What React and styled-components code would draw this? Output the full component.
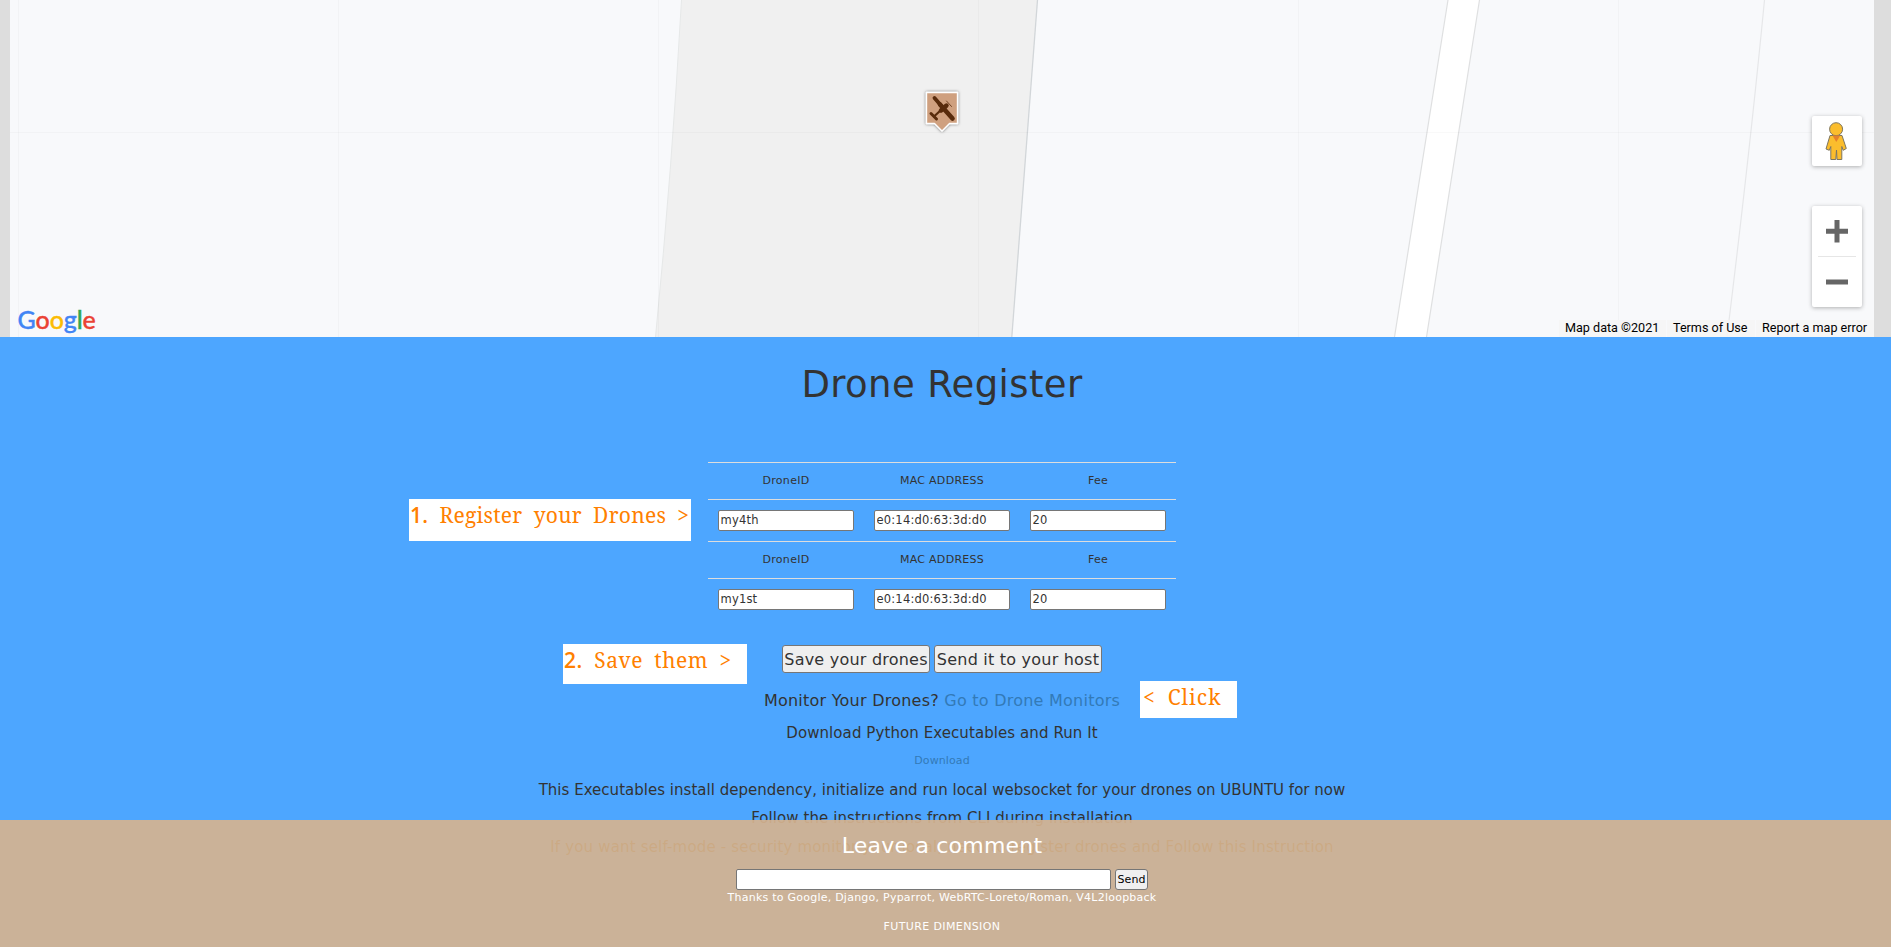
import React from "react";
import styled, { createGlobalStyle } from "styled-components";

const GlobalStyle = createGlobalStyle`
  * { box-sizing: border-box; }
  html, body { margin: 0; height: 100%; overflow: hidden; }
  body {
    background: #4da6ff;
    color: #333;
    font: 11px/20px Verdana, "DejaVu Sans", sans-serif;
  }
`;

const Page = styled.div`
  position: relative;
  height: 947px;
  overflow: hidden;
  background: #4da6ff;
`;

const MapFrame = styled.section`
  height: 337px;
  padding: 0 17px 0 10px;
  background: #ddd;
`;

const MapView = styled.div`
  position: relative;
  height: 100%;
  overflow: hidden;
  background: #f8f9fb;
`;

const MapDrawing = styled.svg`
  display: block;
  width: 1864px;
  height: 337px;
`;

const MapLogo = styled.div`
  position: absolute;
  left: 7.5px;
  bottom: 3px;
  font: 500 25px/30px Lato, sans-serif;
  letter-spacing: -0.1px;
  text-shadow: 0 0 2px #fff, 0 0 2px #fff;
`;

const LogoLetter = styled.span`
  color: ${(p) => p.$color};
  -webkit-text-stroke: 0.4px ${(p) => p.$color};
`;

const MapControls = styled.div`
  position: absolute;
  right: 12px;
  bottom: 30px;
  display: flex;
  flex-direction: column;
  gap: 40px;
`;

const Control = styled.div`
  display: flex;
  flex-direction: column;
  align-items: center;
  width: 50px;
  background: #fff;
  border-radius: 2px;
  box-shadow: 0 1px 4px rgba(0, 0, 0, 0.3);
  svg { display: block; }
`;

const ControlDivider = styled.div`
  width: 38px;
  height: 1px;
  background: #e6e6e6;
`;

const Attribution = styled.div`
  position: absolute;
  right: 0;
  bottom: 0;
  display: flex;
  gap: 1px;
  font: 12.6px/15.5px Roboto, sans-serif;
  color: #000;
`;

const Credit = styled.span`
  width: ${(p) => p.$width}px;
  height: 17px;
  padding-left: 6px;
  background: rgba(245, 245, 245, 0.9);
  white-space: nowrap;
`;

const Content = styled.main`
  display: flex;
  flex-direction: column;
  align-items: center;
  padding: 0 17px 0 10px;
`;

const Title = styled.h1`
  margin: 28px 0 57px;
  font-size: 37px;
  font-weight: 400;
  line-height: 40px;
  letter-spacing: 0.38px;
`;

const DroneTable = styled.div`
  display: flex;
  flex-direction: column;
  width: 468px;
`;

const TableRow = styled.div`
  display: grid;
  grid-template-columns: repeat(3, 156px);
  height: ${(p) => (p.$fields ? 42 : 37)}px;
  padding-top: ${(p) => (p.$fields ? 10 : 8)}px;
  border-top: 1px solid #ddd;
  justify-items: center;
  letter-spacing: 0.29px;
`;

const Field = styled.input`
  width: ${(p) => p.$width || 136}px;
  height: 21px;
  padding: 0 1.5px 1px;
  border: 1px solid #767676;
  border-radius: 2px;
  background: #fff;
  color: #333;
  font: inherit;
  font-size: 11.5px;
  line-height: 17px;
  letter-spacing: 0.2px;
`;

const Actions = styled.div`
  display: flex;
  gap: 4px;
  margin-top: 25px;
`;

const Button = styled.button`
  display: flex;
  align-items: center;
  justify-content: center;
  width: ${(p) => p.$width}px;
  height: ${(p) => (p.$small ? 21 : 28)}px;
  padding: 0;
  border: 1px solid #767676;
  border-radius: 3px;
  background: #efefef;
  color: ${(p) => (p.$small ? "#000" : "#333")};
  font-family: inherit;
  font-size: ${(p) => (p.$small ? 11 : 16)}px;
  letter-spacing: ${(p) => (p.$small ? 0.1 : 0.22)}px;
  white-space: nowrap;
`;

const Line = styled.p`
  margin: ${(p) => p.$top}px 0 0;
  font-size: ${(p) => p.$size || 15}px;
  line-height: 20px;
  letter-spacing: ${(p) => p.$spacing || 0}px;
  color: ${(p) => p.$color || "inherit"};
  white-space: nowrap;
`;

const Link = styled.a`
  color: #337ab7;
  text-decoration: none;
`;

const Note = styled.div`
  position: absolute;
  left: ${(p) => p.$x}px;
  top: ${(p) => p.$y}px;
  width: ${(p) => p.$width}px;
  height: ${(p) => p.$height}px;
  padding: ${(p) => p.$inset};
  background: #fff;
  color: #ff8000;
  font: 21px/30px "Noto Serif", "DejaVu Serif", serif;
  letter-spacing: ${(p) => p.$spacing}px;
  word-spacing: 5.5px;
  white-space: nowrap;
`;

const NoteNumber = styled.b`
  font: 600 21px/30px "Open Sans", sans-serif;
`;

const Footer = styled.footer`
  position: absolute;
  left: 0;
  right: 0;
  bottom: 0;
  height: 127px;
  padding: 14px 17px 0 10px;
  display: flex;
  flex-direction: column;
  align-items: center;
  background: rgba(214, 179, 143, 0.92);
  color: #fff;
`;

const FooterTitle = styled.h3`
  margin: 0 0 11px;
  font-size: 22px;
  font-weight: 400;
  line-height: 24px;
  letter-spacing: 0.22px;
`;

const CommentForm = styled.div`
  display: flex;
  gap: 4px;
`;

const FooterText = styled.p`
  margin: 1px 0 14px;
  line-height: 14px;
  letter-spacing: ${(p) => p.$spacing}px;
`;

const drones = [
  { id: "my4th", mac: "e0:14:d0:63:3d:d0", fee: "20" },
  { id: "my1st", mac: "e0:14:d0:63:3d:d0", fee: "20" },
];

const logo = [
  ["G", "#4285f4"],
  ["o", "#ea4335"],
  ["o", "#fbbc05"],
  ["g", "#4285f4"],
  ["l", "#34a853"],
  ["e", "#ea4335"],
];

function MapCanvas() {
  return (
    <MapDrawing viewBox="10 0 1864 337">
      <defs>
        <filter id="pinShadow" x="-50%" y="-50%" width="200%" height="200%">
          <feDropShadow dx="0" dy="0" stdDeviation="1.800" floodColor="#000" floodOpacity="0.600" />
        </filter>
      </defs>
      <path d="M681.500 0Q672 170 655.500 337H1012L1037.500 0Z" fill="#f0f0f0" />
      <path d="M681.500 0Q672 170 655.500 337" fill="none" stroke="#e6e8e8" />
      <path d="M1037.500 0L1011.800 337" stroke="#d2d6d9" strokeWidth="1.3" />
      <path d="M1448 0L1394.500 337H1426.500L1479.500 0Z" fill="#fff" />
      <path d="M1448 0L1394.500 337M1479.500 0L1426.500 337" stroke="#dfe0e1" strokeWidth="1.2" />
      <path d="M1764.500 0Q1750 150 1727 337" fill="none" stroke="#e6e7e9" strokeWidth="1.2" />
      <path
        d="M18.500 0V337M338.500 0V337M658.500 0V337M978.500 0V337M1298.500 0V337M1618.500 0V337M10 132.500H1874"
        stroke="#000"
        strokeOpacity="0.025"
      />
      <path
        d="M926.500 92.500H957.500V123.500H949.500L942 131L934.500 123.500H926.500Z"
        fill="#cfa07f"
        stroke="#fff"
        strokeWidth="1.400"
        strokeLinejoin="round"
        filter="url(#pinShadow)"
      />
      <g stroke="#582b0c" strokeLinecap="round" fill="none">
        <path d="M934.500 98L941 105.500" strokeWidth="3.800" />
        <path d="M940 104.500L952.500 118.500" strokeWidth="4.600" />
        <path d="M946.500 105.500L941 110.500" strokeWidth="4.400" />
        <path d="M941 110L934 116.500" strokeWidth="2.200" />
        <path d="M931 113.500L936.500 119" strokeWidth="3" />
        <path d="M946.500 101L951.500 106.500" strokeWidth="0.800" />
      </g>
    </MapDrawing>
  );
}

function Pegman() {
  return (
    <svg width="50" height="50" viewBox="0 0 50 50">
      <g fill="#fbbd2d" stroke="#7c7560" strokeWidth="1" strokeLinejoin="round">
        <path d="M18 19.500H30L34.300 32.500L31.200 34.300L29.800 30.500V43.500H25L24.500 34L23.800 43.500H18.800V30.500L17.300 34.300L14 33Z" />
        <circle cx="24.100" cy="13.200" r="6.500" />
      </g>
      <path d="M20.500 19.500H28.200L24.300 26Z" fill="#e5812b" />
    </svg>
  );
}

export default function App() {
  return (
    <>
      <GlobalStyle />
      <Page>
        <MapFrame>
          <MapView>
            <MapCanvas />
            <MapLogo>
              {logo.map(([letter, color], i) => (
                <LogoLetter key={i} $color={color}>{letter}</LogoLetter>
              ))}
            </MapLogo>
            <MapControls>
              <Control><Pegman /></Control>
              <Control>
                <svg width="50" height="50" viewBox="0 0 50 50">
                  <path d="M14 25.200H36M25 14V36.500" stroke="#666" strokeWidth="5" />
                </svg>
                <ControlDivider />
                <svg width="50" height="50" viewBox="0 0 50 50">
                  <path d="M14 25H36" stroke="#666" strokeWidth="5" />
                </svg>
              </Control>
            </MapControls>
            <Attribution>
              <Credit $width={107}>Map data ©2021</Credit>
              <Credit $width={88}>Terms of Use</Credit>
              <Credit $width={118}>Report a map error</Credit>
            </Attribution>
          </MapView>
        </MapFrame>

        <Content>
          <Title>Drone Register</Title>
          <DroneTable>
            {drones.map((drone) => (
              <React.Fragment key={drone.id}>
                <TableRow>
                  <span>DroneID</span>
                  <span>MAC ADDRESS</span>
                  <span>Fee</span>
                </TableRow>
                <TableRow $fields>
                  <Field defaultValue={drone.id} />
                  <Field defaultValue={drone.mac} />
                  <Field defaultValue={drone.fee} />
                </TableRow>
              </React.Fragment>
            ))}
          </DroneTable>
          <Actions>
            <Button $width={148}>Save your drones</Button>
            <Button $width={168}>Send it to your host</Button>
          </Actions>
          <Line $top={18} $size={16} $spacing={0.24}>
            Monitor Your Drones? <Link>Go to Drone Monitors</Link>
          </Line>
          <Line $top={12} $spacing={0.08}>Download Python Executables and Run It</Line>
          <Line $top={8} $size={11} $spacing={0.1}><Link>Download</Link></Line>
          <Line $top={9} $spacing={0.02}>
            This Executables install dependency, initialize and run local websocket for your drones on UBUNTU for now
          </Line>
          <Line $top={8} $spacing={0.08}>Follow the instructions from CLI during installation</Line>
          <Line $top={9} $spacing={0.17} $color="#4a3c00">
            If you want self-mode - security monitor your local, need to register drones and Follow this Instruction
          </Line>
        </Content>

        <Note $x={409} $y={499} $width={282} $height={42} $inset="1px 0 0 1px" $spacing={0.25}>
          <NoteNumber>1.</NoteNumber> Register your Drones &gt;
        </Note>
        <Note $x={563} $y={644} $width={184} $height={40} $inset="1px 0 0 1px" $spacing={0.5}>
          <NoteNumber>2.</NoteNumber> Save them &gt;
        </Note>
        <Note $x={1140} $y={681} $width={97} $height={37} $inset="1px 0 0 3px" $spacing={1}>
          &lt; Click
        </Note>

        <Footer>
          <FooterTitle>Leave a comment</FooterTitle>
          <CommentForm>
            <Field $width={375} />
            <Button $small $width={33}>Send</Button>
          </CommentForm>
          <FooterText $spacing={0.24}>
            Thanks to Google, Django, Pyparrot, WebRTC-Loreto/Roman, V4L2loopback
          </FooterText>
          <FooterText $spacing={0.38}>FUTURE DIMENSION</FooterText>
        </Footer>
      </Page>
    </>
  );
}
